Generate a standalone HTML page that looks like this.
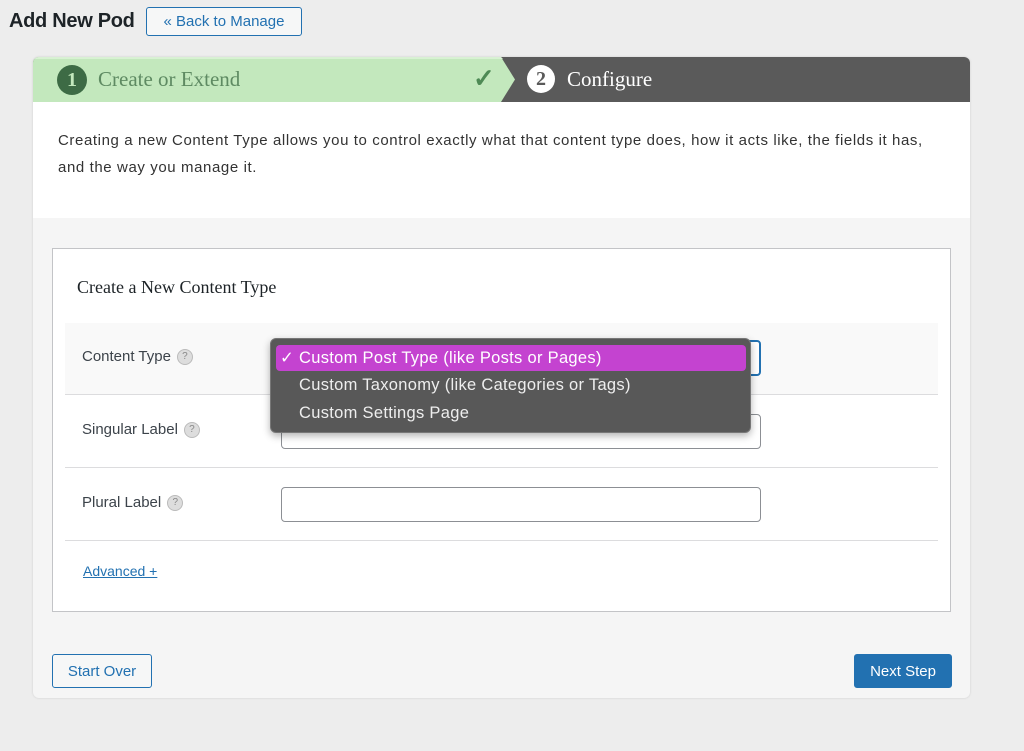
<!DOCTYPE html><html><head><style>
body{margin:0;width:1024px;height:751px;background:#ededed;font-family:"Liberation Sans",sans-serif;position:relative;overflow:hidden}
.a{position:absolute}
.btn{border:1px solid #2271b1;color:#2271b1;border-radius:3px;background:#f6f7f7;font-size:15px;display:flex;align-items:center;justify-content:center;box-sizing:border-box}
.lbl{font-size:15px;color:#3c434a}
.q{display:inline-block;width:14px;height:14px;border-radius:50%;background:#ddd;border:1px solid #bbb;color:#888;font-size:10px;text-align:center;line-height:14px;vertical-align:middle;margin-left:6px}
.inp{background:#fff;border:1px solid #8c8f94;border-radius:4px;box-sizing:border-box}
.line{height:1px;background:#dcdcde;left:65px;width:873px}
.dd{font-size:16.5px;letter-spacing:0.3px}
</style></head><body>
<div class="a" style="left:9px;top:10px;font-size:20px;font-weight:bold;color:#1d2327;letter-spacing:-0.3px">Add New Pod</div>
<div class="a btn" style="left:146px;top:7px;width:156px;height:29px">« Back to Manage</div>
<div class="a" style="left:33px;top:57px;width:937px;height:641px;background:#f5f5f5;border-radius:6px;overflow:hidden;box-shadow:0 0 2px #ccc">
<div class="a" style="left:0;top:0;width:937px;height:45px;background:#5a5a5a"></div>
<svg class="a" style="left:0;top:0" width="490" height="45"><polygon points="0,0 468,0 482,22.5 468,45 0,45" fill="#c3e8bd"/><polygon points="0,0 468,0 470,2 0,2" fill="#d8f1d3"/></svg>
<div class="a" style="left:24px;top:8px;width:30px;height:30px;border-radius:50%;background:#3d6b45;color:#c3e8bd;font:bold 20px 'Liberation Serif',serif;text-align:center;line-height:30px">1</div>
<div class="a" style="left:65px;top:10px;font:21px 'Liberation Serif',serif;color:#5e8a62">Create or Extend</div>
<div class="a" style="left:440px;top:6px;font-size:26px;font-weight:bold;color:#4e8a55">✓</div>
<div class="a" style="left:494px;top:8px;width:28px;height:28px;border-radius:50%;background:#fff;color:#5a5a5a;font:bold 20px 'Liberation Serif',serif;text-align:center;line-height:28px">2</div>
<div class="a" style="left:534px;top:10px;font:21px 'Liberation Serif',serif;color:#fff">Configure</div>
<div class="a" style="left:0;top:45px;width:937px;height:116px;background:#fff"></div>
<div class="a" style="left:25px;top:70px;width:900px;font-size:15px;letter-spacing:0.6px;line-height:27px;color:#333;white-space:nowrap">Creating a new Content Type allows you to control exactly what that content type does, how it acts like, the fields it has,<br>and the way you manage it.</div>
</div>
<div class="a" style="left:52px;top:248px;width:899px;height:364px;background:#fff;border:1px solid #c3c4c7;box-sizing:border-box"></div>
<div class="a" style="left:77px;top:277px;font:18px 'Liberation Serif',serif;color:#1d2327">Create a New Content Type</div>
<div class="a" style="left:65px;top:323px;width:873px;height:71px;background:#f9f9f9"></div>
<div class="a line" style="top:394px"></div><div class="a line" style="top:467px"></div><div class="a line" style="top:540px"></div>
<div class="a lbl" style="left:82px;top:348px">Content Type<span class="q">?</span></div>
<div class="a lbl" style="left:82px;top:421px">Singular Label<span class="q">?</span></div>
<div class="a lbl" style="left:82px;top:494px">Plural Label<span class="q">?</span></div>
<div class="a inp" style="left:281px;top:340px;width:480px;height:36px;border:2px solid #2271b1"></div>
<div class="a inp" style="left:281px;top:414px;width:480px;height:35px"></div>
<div class="a inp" style="left:281px;top:487px;width:480px;height:35px"></div>
<div class="a" style="left:270px;top:338px;width:481px;height:95px;background:#585858;border:1px solid #777;border-radius:6px;box-sizing:border-box;box-shadow:0 3px 8px rgba(0,0,0,.3)"></div>
<div class="a" style="left:276px;top:345px;width:470px;height:26px;background:#c443d0;border-radius:4px"></div>
<div class="a dd" style="left:280px;top:348px;color:#fff">✓ Custom Post Type (like Posts or Pages)</div>
<div class="a dd" style="left:299px;top:376px;color:#eee">Custom Taxonomy (like Categories or Tags)</div>
<div class="a dd" style="left:299px;top:404px;color:#eee">Custom Settings Page</div>
<div class="a" style="left:83px;top:563px;font-size:14px;color:#2271b1;text-decoration:underline">Advanced +</div>
<div class="a btn" style="left:52px;top:654px;width:100px;height:34px">Start Over</div>
<div class="a btn" style="left:854px;top:654px;width:98px;height:34px;background:#2271b1;color:#fff">Next Step</div>
</body></html>
